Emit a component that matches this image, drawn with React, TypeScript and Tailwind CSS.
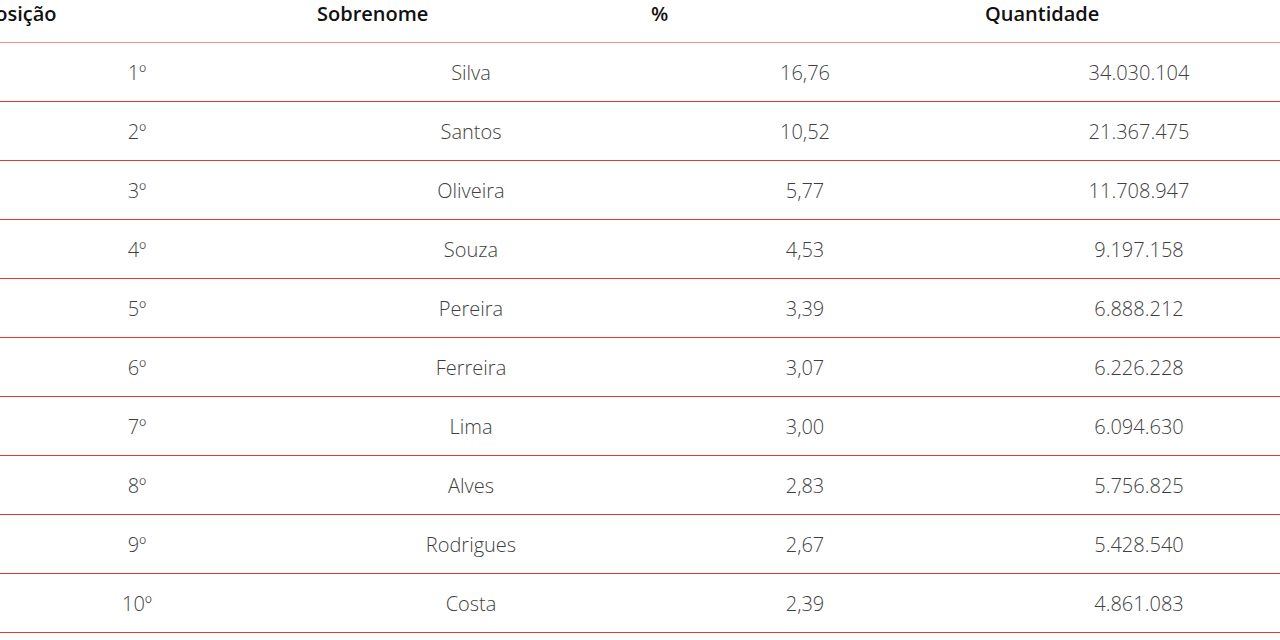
import React from "react";

const rows = [
  { pos: "1º", nome: "Silva", pct: "16,76", qtd: "34.030.104" },
  { pos: "2º", nome: "Santos", pct: "10,52", qtd: "21.367.475" },
  { pos: "3º", nome: "Oliveira", pct: "5,77", qtd: "11.708.947" },
  { pos: "4º", nome: "Souza", pct: "4,53", qtd: "9.197.158" },
  { pos: "5º", nome: "Pereira", pct: "3,39", qtd: "6.888.212" },
  { pos: "6º", nome: "Ferreira", pct: "3,07", qtd: "6.226.228" },
  { pos: "7º", nome: "Lima", pct: "3,00", qtd: "6.094.630" },
  { pos: "8º", nome: "Alves", pct: "2,83", qtd: "5.756.825" },
  { pos: "9º", nome: "Rodrigues", pct: "2,67", qtd: "5.428.540" },
  { pos: "10º", nome: "Costa", pct: "2,39", qtd: "4.861.083" },
];

const headers = ["Posição", "Sobrenome", "%", "Quantidade"];

export default function App() {
  return (
    <div className="w-[1280px] h-[640px] overflow-hidden bg-white font-['Open_Sans',sans-serif]">
      {/* table is wider than the viewport, scrolled a bit to the right */}
      <div className="w-[1336px] ml-[-30px]">
        <div className="grid grid-cols-4 h-[43px] border-b border-[#ff8a8a]">
          {headers.map((h) => (
            <div key={h} className="pl-[13px] text-left text-[20px] leading-[28px] font-semibold text-[#111]">
              {h}
            </div>
          ))}
        </div>

        {rows.map((r) => (
          <div
            key={r.pos}
            className="grid grid-cols-4 h-[59px] pt-[2px] border-b border-[#e53935] items-center text-center text-[20px] font-light text-[#3f3f3f]"
          >
            <div>{r.pos}</div>
            <div>{r.nome}</div>
            <div>{r.pct}</div>
            <div>{r.qtd}</div>
          </div>
        ))}
      </div>
    </div>
  );
}
